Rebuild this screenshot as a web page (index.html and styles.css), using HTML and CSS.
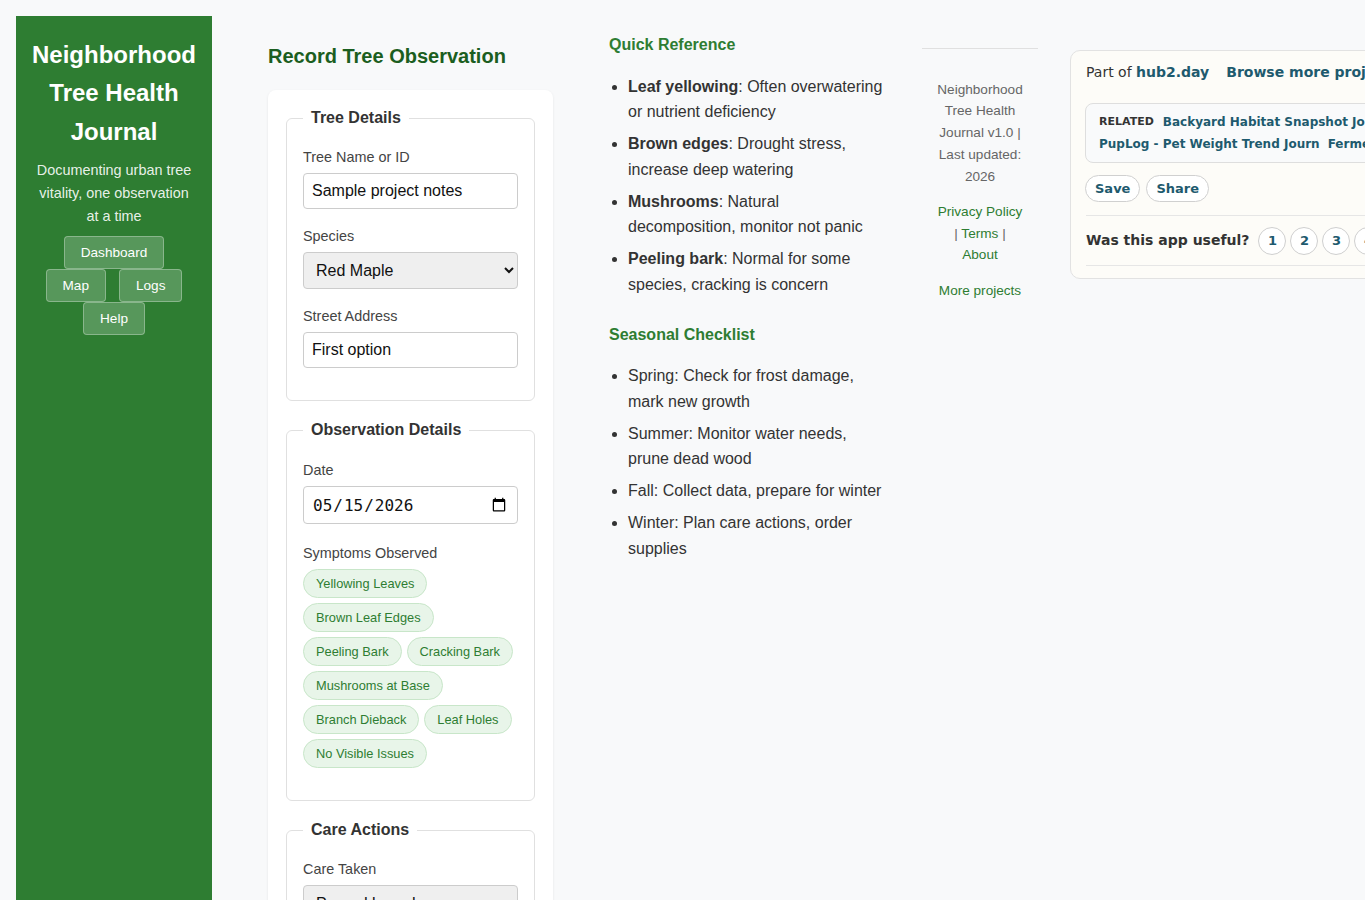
FILE: index.html
```html
<!DOCTYPE html>
<html lang="en">
<head>
<meta charset="utf-8">
<title>Neighborhood Tree Health Journal</title>
<link rel="stylesheet" href="styles.css">
</head>
<body>
<div class="layout">
  <header class="sidebar">
    <h1 class="brand">Neighborhood Tree Health Journal</h1>
    <p class="tagline">Documenting urban tree vitality, one observation at a time</p>
    <nav class="nav">
      <a class="nav-btn" href="#">Dashboard</a>
      <a class="nav-btn" href="#">Map</a>
      <a class="nav-btn" href="#">Logs</a>
      <a class="nav-btn" href="#">Help</a>
    </nav>
  </header>

  <main class="main">
    <h2 class="page-title">Record Tree Observation</h2>
    <form class="card">
      <fieldset class="group">
        <legend>Tree Details</legend>
        <div class="field">
          <label for="tree">Tree Name or ID</label>
          <input id="tree" class="control" type="text" value="Sample project notes">
        </div>
        <div class="field">
          <label for="species">Species</label>
          <select id="species" class="control select">
            <option>Red Maple</option>
            <option>Sugar Maple</option>
            <option>Pin Oak</option>
          </select>
        </div>
        <div class="field">
          <label for="addr">Street Address</label>
          <input id="addr" class="control" type="text" value="First option">
        </div>
      </fieldset>

      <fieldset class="group">
        <legend>Observation Details</legend>
        <div class="field field-date">
          <label for="date">Date</label>
          <input id="date" class="control date" type="date" value="2026-05-15">
        </div>
        <div class="field">
          <label>Symptoms Observed</label>
          <div class="chips">
            <span class="chip">Yellowing Leaves</span>
            <span class="chip">Brown Leaf Edges</span>
            <span class="chip">Peeling Bark</span>
            <span class="chip">Cracking Bark</span>
            <span class="chip">Mushrooms at Base</span>
            <span class="chip">Branch Dieback</span>
            <span class="chip">Leaf Holes</span>
            <span class="chip">No Visible Issues</span>
          </div>
        </div>
      </fieldset>

      <fieldset class="group">
        <legend>Care Actions</legend>
        <div class="field">
          <label for="care">Care Taken</label>
          <select id="care" class="control select">
            <option>Pruned branches</option>
            <option>Watered</option>
            <option>Mulched</option>
          </select>
        </div>
        <div class="field">
          <label for="notes">Notes</label>
          <textarea id="notes" class="control textarea" rows="4"></textarea>
        </div>
      </fieldset>
      <button class="submit" type="button">Save Observation</button>
    </form>
  </main>

  <aside class="reference">
    <h3 class="ref-title">Quick Reference</h3>
    <ul class="ref-list">
      <li><strong>Leaf yellowing</strong>: Often overwatering or nutrient deficiency</li>
      <li><strong>Brown edges</strong>: Drought stress, increase deep watering</li>
      <li><strong>Mushrooms</strong>: Natural decomposition, monitor not panic</li>
      <li><strong>Peeling bark</strong>: Normal for some species, cracking is concern</li>
    </ul>
    <h3 class="ref-title spaced">Seasonal Checklist</h3>
    <ul class="ref-list">
      <li>Spring: Check for frost damage, mark new growth</li>
      <li>Summer: Monitor water needs, prune dead wood</li>
      <li>Fall: Collect data, prepare for winter</li>
      <li>Winter: Plan care actions, order supplies</li>
    </ul>
  </aside>

  <footer class="footer">
    <p>Neighborhood Tree Health Journal v1.0 | Last updated: 2026</p>
    <p><a href="#">Privacy Policy</a> | <a href="#">Terms</a> | <a href="#">About</a></p>
    <p><a href="#">More projects</a></p>
  </footer>

  <section class="hub">
    <div class="hub-top">
      <span>Part of <a class="hub-link" href="#">hub2.day</a></span>
      <a class="hub-link" href="#">Browse more projects</a>
    </div>
    <div class="related">
      <span class="rel-label">RELATED</span>
      <a class="hub-link" href="#">Backyard Habitat Snapshot Journal</a>
      <a class="hub-link" href="#">PupLog - Pet Weight Trend Journ</a>
      <a class="hub-link" href="#">Fermentation Tracker</a>
    </div>
    <div class="hub-actions">
      <button class="pill" type="button">Save</button>
      <button class="pill" type="button">Share</button>
    </div>
    <div class="rating">
      <span class="rating-q">Was this app useful?</span>
      <button class="circle" type="button">1</button>
      <button class="circle" type="button">2</button>
      <button class="circle" type="button">3</button>
      <button class="circle" type="button">4</button>
      <button class="circle" type="button">5</button>
    </div>
  </section>
</div>
</body>
</html>
```

FILE: styles.css
```css
html, body {
  overflow-x: hidden;
}

body {
  margin: 0;
  padding: 16px;
  background: #f8f9fa;
  color: #333;
  font-family: "Liberation Sans", Arial, sans-serif;
  font-size: 16px;
  line-height: 1.6;
}

.layout {
  display: flex;
  align-items: flex-start;
  gap: 32px;
  width: max-content;
}

/* Sidebar */
.sidebar {
  align-self: stretch;
  width: 196px;
  box-sizing: border-box;
  padding: 20px 16px;
  background: #2e7d32;
  color: #fff;
  text-align: center;
  min-height: 900px;
}

.brand {
  margin: 0;
  font-size: 24px;
  line-height: 1.6;
  font-weight: bold;
}

.tagline {
  margin: 8px 0;
  font-size: 0.9rem;
  line-height: 1.6;
  color: rgba(255, 255, 255, 0.9);
}

.nav {
  display: flex;
  flex-wrap: wrap;
  justify-content: center;
  column-gap: 13px;
  row-gap: 0;
}

.nav-btn {
  display: inline-block;
  padding: 8px 16px;
  font-size: 0.85rem;
  line-height: 15px;
  color: #fff;
  text-decoration: none;
  background: rgba(255, 255, 255, 0.2);
  border: 1px solid rgba(255, 255, 255, 0.3);
  border-radius: 4px;
}

/* Main */
.main {
  width: 333px;
  box-sizing: border-box;
  padding: 24px;
}

.page-title {
  margin: 0 0 18px;
  font-size: 20px;
  line-height: 32px;
  color: #1b5e20;
}

.card {
  background: #fff;
  border-radius: 8px;
  padding: 19px 18px 18px;
  box-shadow: 0 1px 3px rgba(0, 0, 0, 0.08);
}

.group {
  margin: 0 0 20px;
  padding: 19px 16px 16px;
  border: 1px solid #e0e0e0;
  border-radius: 6px;
  min-width: 0;
}

.group legend {
  padding: 0 8px;
  font-size: 16px;
  font-weight: bold;
  line-height: normal;
  color: #333;
}

.field {
  margin-bottom: 16px;
}

.field-date {
  padding-top: 1px;
  margin-bottom: 18px;
}

.field label {
  display: block;
  margin-bottom: 4px;
  font-size: 0.9rem;
  line-height: 1.6;
  color: #444;
}

.control {
  display: block;
  width: 100%;
  box-sizing: border-box;
  padding: 8px;
  font-family: "Liberation Sans", Arial, sans-serif;
  font-size: 16px;
  color: #111;
  background: #fff;
  border: 1px solid #ccc;
  border-radius: 4px;
}

.select {
  height: 37px;
  padding-top: 0;
  padding-bottom: 0;
  background-color: #efefef;
}

.date {
  height: 38px;
  padding-top: 0;
  padding-bottom: 0;
  font-family: "DejaVu Sans Mono", monospace;
  font-size: 16px;
}

.textarea {
  resize: vertical;
}

.chips {
  display: flex;
  flex-wrap: wrap;
  gap: 5px;
}

.chip {
  display: inline-block;
  padding: 6px 12px;
  font-size: 0.8rem;
  line-height: 15px;
  color: #2e7d32;
  background: #e8f5e9;
  border: 1px solid #c8e6c9;
  border-radius: 15px;
}

.submit {
  padding: 10px 20px;
  font-family: inherit;
  font-size: 16px;
  color: #fff;
  background: #2e7d32;
  border: none;
  border-radius: 4px;
}

/* Quick reference */
.reference {
  width: 281px;
  padding-top: 16px;
}

.ref-title {
  margin: 0;
  font-size: 16px;
  line-height: 1.6;
  color: #2e7d32;
}

.ref-title.spaced {
  margin-top: 24px;
}

.ref-list {
  margin: 16px 0;
  padding-left: 19px;
}

.ref-list li {
  margin-bottom: 6.4px;
}

/* Footer */
.footer {
  width: 116px;
  box-sizing: border-box;
  margin-top: 32px;
  padding: 16px 15px;
  border-top: 1px solid #e0e0e0;
  text-align: center;
  font-size: 0.85rem;
  line-height: 1.6;
  color: #666;
}

.footer p {
  margin: 13.6px 0;
}

.footer a {
  color: #2e7d32;
  text-decoration: none;
}

/* hub widget */
.hub {
  width: 460px;
  box-sizing: border-box;
  margin-top: 34px;
  padding: 12px 15px;
  background: #fdfcf8;
  border: 1px solid #e2e2e2;
  border-radius: 10px;
  font-family: "DejaVu Sans", sans-serif;
  font-size: 14px;
  line-height: 1.4;
  color: #333;
}

.hub-link {
  color: #1e5a6e;
  font-weight: bold;
  text-decoration: none;
}

.hub-top {
  display: flex;
  gap: 17px;
}

.related {
  display: flex;
  flex-wrap: wrap;
  align-items: center;
  column-gap: 8px;
  margin: 20px 0 0 -1px;
  padding: 7px 13px;
  background: #f9fafb;
  border: 1px solid #dedede;
  border-radius: 8px;
}

.related > * {
  line-height: 22px;
  height: 22px;
}

.related .hub-link {
  font-size: 12px;
}

.rel-label {
  font-size: 11px;
  font-weight: bold;
  color: #333;
  margin-right: 1px;
}

.hub-actions {
  display: flex;
  gap: 6px;
  margin: 12px 0 0 -1px;
}

.pill {
  padding: 5px 9px;
  font-family: "DejaVu Sans", sans-serif;
  font-size: 13px;
  font-weight: bold;
  line-height: 15px;
  color: #1e5a6e;
  background: #fff;
  border: 1px solid #d0d0d0;
  border-radius: 14px;
}

.rating {
  display: flex;
  align-items: center;
  gap: 4px;
  margin-top: 13px;
  padding: 11px 0 10px;
  border-top: 1px solid #e6e6e6;
  border-bottom: 1px solid #e6e6e6;
}

.rating-q {
  font-size: 14px;
  font-weight: bold;
  margin-right: 5px;
}

.circle {
  width: 28px;
  height: 28px;
  padding: 0;
  font-family: "DejaVu Sans", sans-serif;
  font-size: 13px;
  font-weight: bold;
  color: #1e5a6e;
  background: #fff;
  border: 1px solid #cfcfcf;
  border-radius: 50%;
}
```
